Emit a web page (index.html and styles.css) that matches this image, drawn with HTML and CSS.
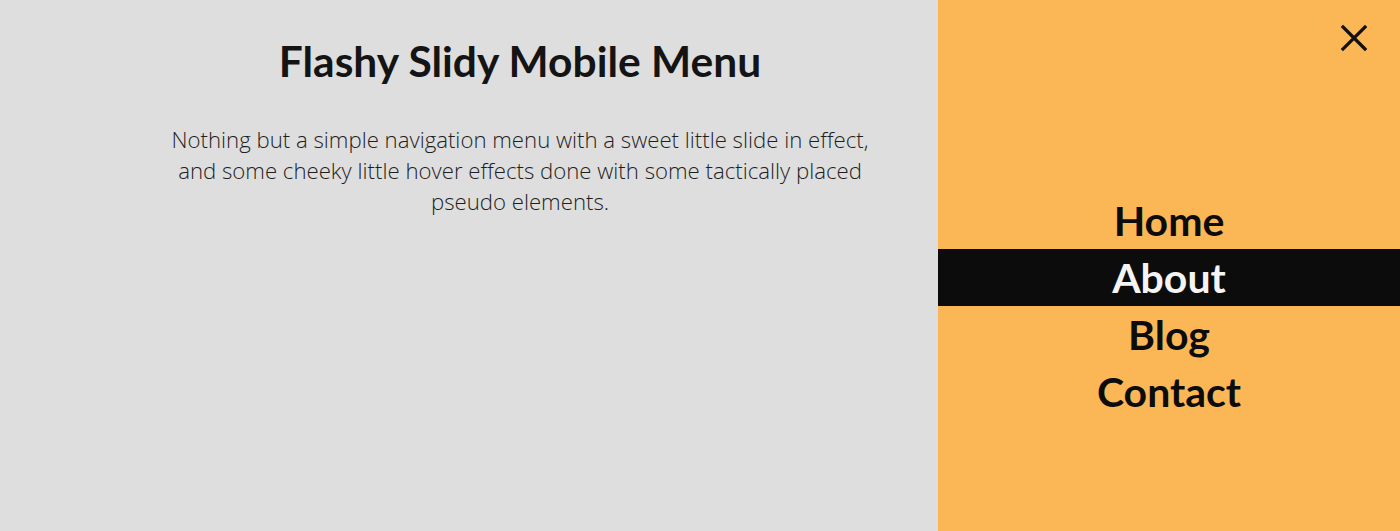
FILE: index.html
```html
<!DOCTYPE html>
<html>
<head>
<meta charset="utf-8">
<link rel="stylesheet" href="styles.css">
</head>
<body>
<main class="content">
  <h1 class="title">Flashy Slidy Mobile Menu</h1>
  <p class="intro">Nothing but a simple navigation menu with a sweet little slide in effect, and some cheeky little hover effects done with some tactically placed pseudo elements.</p>
</main>
<aside class="panel">
  <button class="close" aria-label="Close">
    <svg width="28" height="28" viewBox="0 0 28 28"><path d="M3 3 L25 25 M25 3 L3 25" stroke="#111" stroke-width="3.2" stroke-linecap="square" fill="none"/></svg>
  </button>
  <nav class="menu">
    <a class="item" href="#">Home</a>
    <a class="item active" href="#">About</a>
    <a class="item" href="#">Blog</a>
    <a class="item" href="#">Contact</a>
  </nav>
</aside>
</body>
</html>
```
FILE: styles.css
```css
html, body {
  margin: 0;
  padding: 0;
  height: 100%;
}
body {
  background: #dedede;
  font-family: "Open Sans", sans-serif;
  overflow: hidden;
}
.content {
  width: 1040px;
  display: flex;
  flex-direction: column;
  align-items: center;
  padding-top: 35px;
}
.title {
  margin: 0;
  font-family: "Lato", "Open Sans", sans-serif;
  font-weight: 700;
  font-size: 42.5px;
  line-height: 52px;
  color: #141414;
}
.intro {
  margin: 37px 0 0;
  max-width: 720px;
  text-align: center;
  font-family: "Open Sans", sans-serif;
  font-weight: 300;
  font-size: 22.2px;
  line-height: 31px;
  color: #1e1e1e;
}
.panel {
  position: fixed;
  top: 0;
  right: 0;
  width: 462px;
  height: 100%;
  background: #fbb755;
  display: flex;
  flex-direction: column;
}
.close {
  position: absolute;
  top: 24px;
  right: 32px;
  background: none;
  border: 0;
  padding: 0;
  width: 28px;
  height: 28px;
  cursor: pointer;
}
.close svg {
  display: block;
}
.menu {
  display: flex;
  flex-direction: column;
  margin-top: 192px;
}
.item {
  display: block;
  height: 57px;
  line-height: 57px;
  text-align: center;
  font-family: "Lato", sans-serif;
  font-weight: 700;
  font-size: 41px;
  color: #0c0c0c;
  text-decoration: none;
}
.item.active {
  background: #0c0c0c;
  color: #f4f4f4;
}
```
